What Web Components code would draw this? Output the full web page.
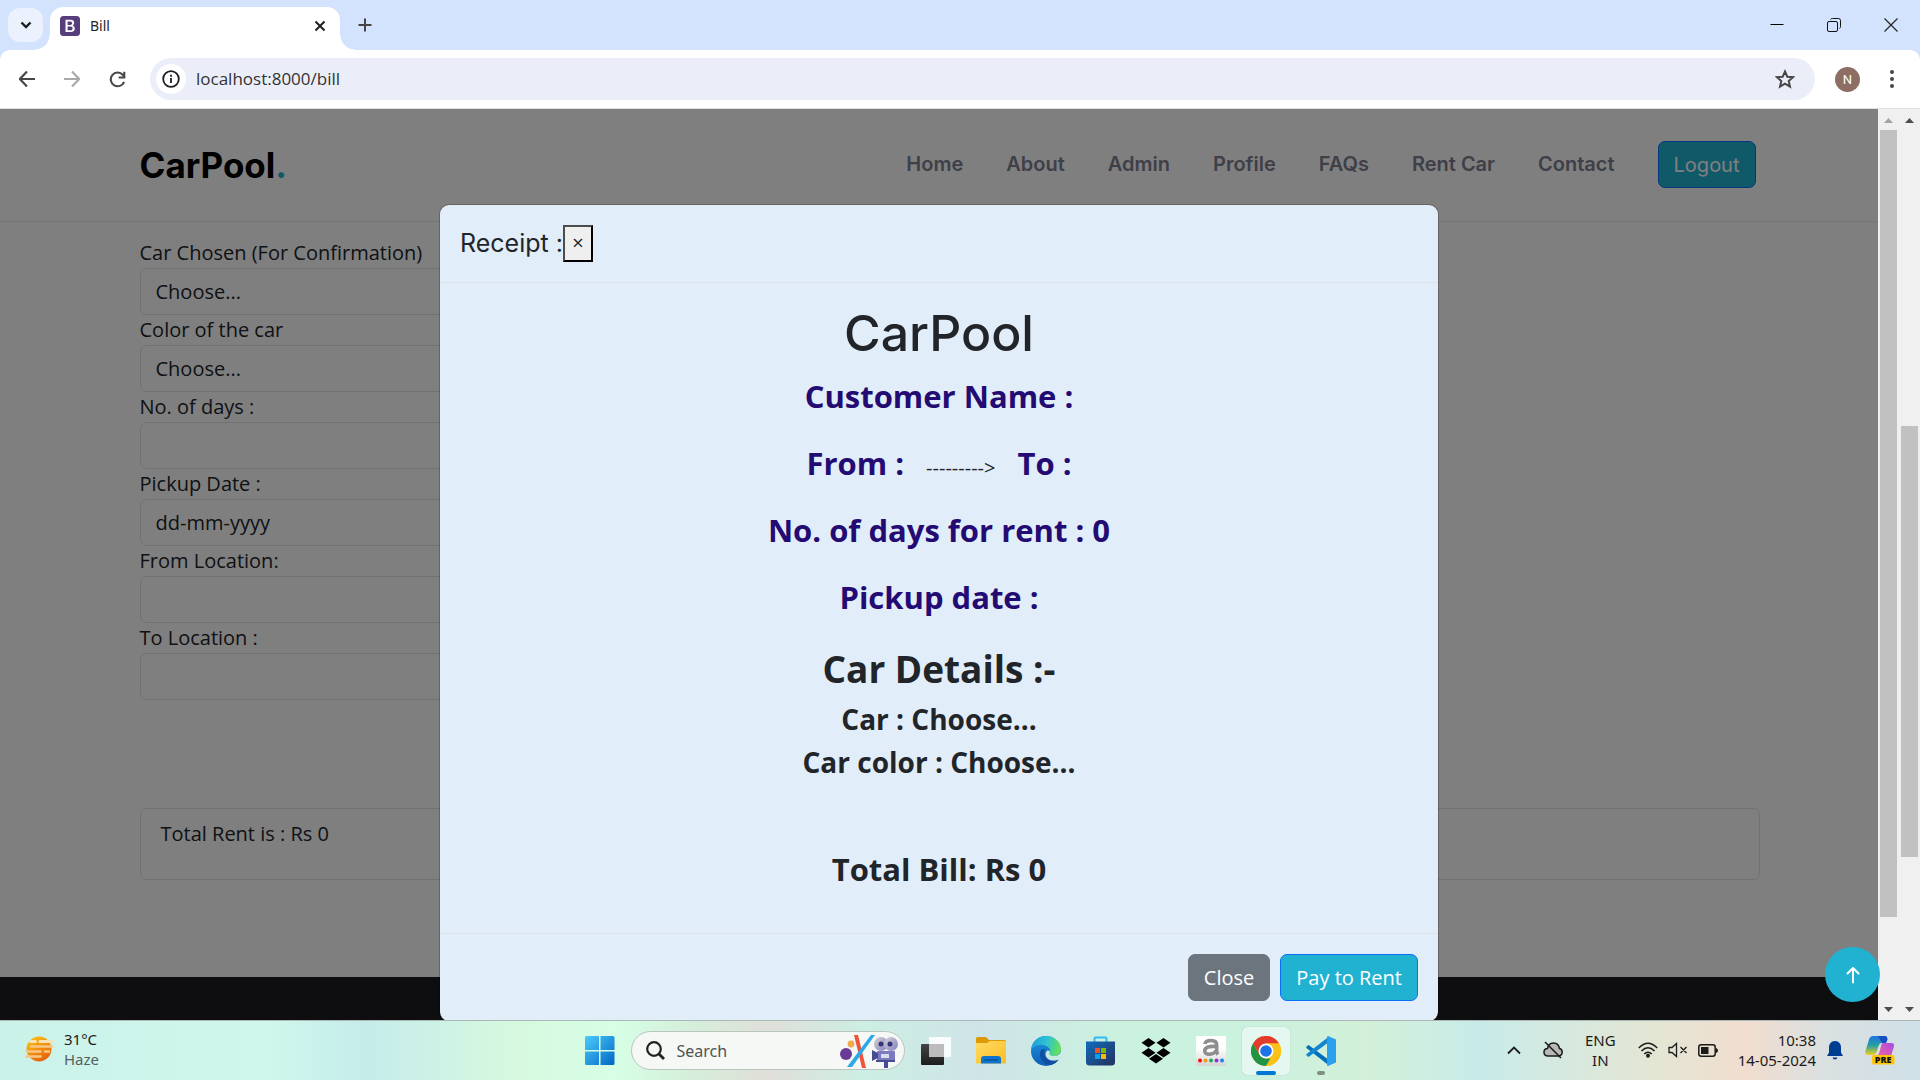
<!DOCTYPE html>
<html lang="en">
<head>
<meta charset="utf-8">
<title>Bill</title>
<style>
  html, body { margin: 0; height: 100%; overflow: hidden; }
  body { font-family: "Open Sans", sans-serif; color: #212529; }
  desktop-screen { height: 100vh; }
</style>
</head>
<body>
<desktop-screen>
  <tab-strip></tab-strip>
  <tool-bar></tool-bar>
  <page-viewport>
    <site-header slot="page"></site-header>
    <bill-form slot="page"></bill-form>
    <receipt-dialog slot="dialog"></receipt-dialog>
    <back-to-top slot="float"></back-to-top>
  </page-viewport>
  <task-bar></task-bar>
</desktop-screen>

<script>
const define = (name, html, setup) => {
  const tpl = document.createElement('template');
  tpl.innerHTML = html;
  customElements.define(name, class extends HTMLElement {
    constructor() {
      super();
      this.attachShadow({ mode: 'open' }).append(tpl.content.cloneNode(true));
    }
    connectedCallback() { if (setup) setup(this, this.shadowRoot); }
  });
};

define('desktop-screen', `
<style>
  :host { display: flex; flex-direction: column; }
</style>
<slot></slot>`);

define('tab-strip', `
<style>
  :host { display: flex; align-items: center; height: 50px; flex: none; background: #d3e3fd; padding: 0 1px 0 8px; font-family: "Noto Sans", sans-serif; }
  button { border: 0; padding: 0; background: none; display: grid; place-items: center; }
  .list { width: 35px; height: 34px; border-radius: 12px; background: #ebf1fd; }
  .tab { position: relative; align-self: flex-end; margin-left: 7px; width: 290px; height: 43px; box-sizing: border-box; padding: 0 10px; border-radius: 13px 13px 0 0; background: #fff; display: flex; align-items: center; gap: 10px; font-size: 14px; line-height: 20px; color: #1f1f1f; padding-bottom: 6px; }
  .tab::before, .tab::after { content: ""; position: absolute; bottom: 0; width: 15px; height: 15px; }
  .tab::before { left: -15px; background: radial-gradient(circle at 0 0, transparent 14px, #fff 15px); }
  .tab::after { right: -15px; background: radial-gradient(circle at 100% 0, transparent 14px, #fff 15px); }
  .title { flex: 1; }
  .new { width: 30px; height: 30px; margin-left: 10px; }
  .window { margin-left: auto; display: flex; }
  .window button { width: 57px; height: 40px; }
</style>
<button class="list" aria-label="Search tabs"><svg width="12" height="8" fill="none" stroke="#1f1f1f" stroke-width="2.4"><path d="M1.5 1.5 6 6l4.500-4.500"/></svg></button>
<div class="tab">
  <svg width="20" height="20"><rect width="20" height="20" rx="3.500" fill="#563d7c"/><path d="M5.500 3.800h5c2.500 0 3.700 1.100 3.700 2.900 0 1.500-.8 2.400-2 2.800 1.600.3 2.600 1.400 2.600 3.100 0 2.200-1.500 3.400-4.100 3.400H5.500zM7.600 5.500v3.400h2.500c1.300 0 2-.6 2-1.700s-.7-1.700-2-1.700zM7.600 10.500v3.800h2.800c1.400 0 2.200-.7 2.200-1.900s-.8-1.900-2.200-1.900z" fill="#fff" fill-rule="evenodd"/></svg>
  <span class="title">Bill</span>
  <button aria-label="Close tab"><svg width="20" height="20" stroke="#1f1f1f" stroke-width="2"><path d="m5.500 5.500 9 9m0-9-9 9"/></svg></button>
</div>
<button class="new" aria-label="New tab"><svg width="14" height="14" stroke="#444" stroke-width="2"><path d="M7 .5v13M.5 7h13"/></svg></button>
<div class="window">
  <button aria-label="Minimize"><svg width="14" height="14" stroke="#000"><path d="M.5 6.500h13"/></svg></button>
  <button aria-label="Restore"><svg width="14" height="14" stroke="#111" fill="none"><rect x=".5" y="3.500" width="10" height="10" rx="1.500"/><path d="M3.500 1.500q.5-1 2-1h6q2 0 2 2v6q0 1.500-1 2"/></svg></button>
  <button aria-label="Close"><svg width="14" height="14" stroke="#222" stroke-width="1.200"><path d="m.5.5 13 13m0-13-13 13"/></svg></button>
</div>`);

define('tool-bar', `
<style>
  :host { display: block; background: #d3e3fd; flex: none; }
  .bar { display: flex; align-items: center; height: 58px; box-sizing: content-box; border-bottom: 1px solid #dcdfe3; background: #fff; border-radius: 10px 10px 0 0; padding: 0 18px 0 12px; }
  button { border: 0; padding: 0; background: none; display: grid; place-items: center; width: 30px; height: 30px; margin-right: 15px; flex: none; }
  .omni { flex: 1; margin: 0 20px 0 3px; height: 42px; border-radius: 21px; background: #ebeef8; display: flex; align-items: center; padding: 0 15px 0 6px; }
  .omni button { margin: 0; }
  .info { background: #fff; border-radius: 50%; }
  input { flex: 1; min-width: 0; margin-left: 10px; padding: 0; border: 0; background: none; outline: 0; font: 17px/24px "Open Sans", sans-serif; color: #333; }
  .avatar { width: 25px; height: 25px; border-radius: 50%; background: #8d6e63; color: #fff; font: 13px/25px Roboto, sans-serif; margin-right: 22px; }
  .menu { width: 20px; margin: 0; }
</style>
<div class="bar">
  <button aria-label="Back"><svg width="16" height="16" viewBox="1 1 16 16" fill="none" stroke="#474747" stroke-width="2.200"><path d="M17 9H2M9 1.500 1.800 9 9 16.500"/></svg></button>
  <button aria-label="Forward"><svg width="16" height="16" viewBox="1 1 16 16" fill="none" stroke="#a9a9a9" stroke-width="2.200"><path d="M1 9h15M9 1.500 16.200 9 9 16.500"/></svg></button>
  <button aria-label="Reload"><svg width="17" height="17" viewBox="0 0 18 18" fill="none" stroke="#474747" stroke-width="2.200"><path d="M16 11.500A7.300 7.300 0 1 1 14.600 4l1.500 2"/><path d="M16.200.8v6.100h-6"/></svg></button>
  <div class="omni">
    <button class="info" aria-label="Site information"><svg width="18" height="18" fill="none" stroke="#1f1f1f" stroke-width="1.800"><circle cx="9" cy="9" r="7.800"/><path d="M9 8v5M9 4.800v1.900"/></svg></button>
    <input aria-label="Address" value="localhost:8000/bill">
    <button aria-label="Bookmark"><svg width="20" height="20" fill="none" stroke="#474747" stroke-width="2"><path d="m10 2.500 2.300 5.200 5.700.5-4.300 3.800 1.300 5.600-5-3-5 3 1.300-5.600L2 8.200l5.700-.5z"/></svg></button>
  </div>
  <button class="avatar" aria-label="Profile">N</button>
  <button class="menu" aria-label="Menu"><svg width="4" height="18" fill="#474747"><circle cx="2" cy="2" r="2"/><circle cx="2" cy="9" r="2"/><circle cx="2" cy="16" r="2"/></svg></button>
</div>`);

define('scroll-track', `
<style>
  :host { display: flex; flex-direction: column; width: 21px; flex: none; background: #f0f0f0; box-sizing: border-box; padding: 0 2px; }
  svg { flex: none; display: block; }
  .space { flex: var(--before, 0); }
  .thumb { flex: var(--size, 1); background: #c1c1c1; }
  .rest { flex: var(--after, 0); }
</style>
<svg width="17" height="21" fill="var(--up, #4d4d4d)"><path d="m4 14 4.500-5 4.500 5z"/></svg>
<div class="space"></div><div class="thumb"></div><div class="rest"></div>
<svg width="17" height="21" fill="#4d4d4d"><path d="m4 8 4.500 5L13 8z"/></svg>`);

define('page-viewport', `
<style>
  :host { display: flex; flex: 1; min-height: 0; overflow: hidden; background: #fff; }
  .frame { position: relative; flex: 1; min-width: 0; overflow: hidden; }
  .page { height: 100%; display: flex; flex-direction: column; }
  .foot { flex: 1; background: #1d1d21; }
  .layer { position: absolute; inset: 0; display: flex; }
  .shade { flex: 1; background: rgba(0, 0, 0, .5); display: flex; justify-content: center; align-items: flex-start; overflow: hidden; }
  .inner { --up: #a3a3a3; --size: 787; --after: 82; }
  .outer { --before: 296; --size: 431; --after: 142; }
</style>
<div class="frame">
  <div class="page"><slot name="page"></slot><div class="foot"></div></div>
  <div class="layer">
    <div class="shade"><slot name="dialog"></slot></div>
    <scroll-track class="inner"></scroll-track>
  </div>
</div>
<scroll-track class="outer"></scroll-track>
<slot name="float"></slot>`);

define('site-header', `
<style>
  :host { display: block; border-bottom: 1px solid #ededed; font-family: Inter, sans-serif; }
  header { max-width: 1620px; margin: 0 auto; height: 112px; display: flex; align-items: center; justify-content: space-between; }
  .logo { color: #000; text-decoration: none; font-size: 35px; line-height: 42px; font-weight: 700; }
  .logo span { color: #21b2d2; }
  nav { display: flex; align-items: center; gap: 43px; padding: 0 4px 1px 0; }
  a { color: #7f7e90; text-decoration: none; font-size: 20px; line-height: 31px; font-weight: 600; }
  button { height: 47px; padding: 0 15px; border: 1px solid #0d6efd; border-radius: 7px; background: #21b2d2; color: #fff; font: 20px/30px Inter, sans-serif; }
</style>
<header>
  <a class="logo" href="#">CarPool<span>.</span></a>
  <nav>
    <a href="#">Home</a><a href="#">About</a><a href="#">Admin</a><a href="#">Profile</a><a href="#">FAQs</a><a href="#">Rent Car</a><a href="#">Contact</a>
    <button>Logout</button>
  </nav>
</header>`);

define('bill-field', `
<style>
  :host { display: block; }
  label { display: block; font-size: 20px; line-height: 30px; }
  input, select { appearance: none; display: block; box-sizing: border-box; width: 100%; height: 47px; margin: 0; padding: 0 15px; border: 1px solid #dee2e6; border-radius: 7px; background: #fff; color: inherit; font: 20px/30px "Open Sans", sans-serif; }
</style>
<label for="control"></label>`, (host, root) => {
  root.querySelector('label').textContent = host.getAttribute('label');
  const value = host.getAttribute('value') || '';
  let control;
  if (host.hasAttribute('select')) {
    control = document.createElement('select');
    control.add(new Option(value));
  } else {
    control = document.createElement('input');
    control.value = value;
  }
  control.id = 'control';
  root.append(control);
});

define('bill-form', `
<style>
  :host { display: block; padding: 16px 0 97px; }
  .container { max-width: 1620px; margin: 0 auto; }
  form { width: 50%; }
  .total { margin-top: 108px; box-sizing: border-box; height: 72px; padding: 10px 20px; border: 1px solid #dee2e6; border-radius: 7px; font-size: 20px; line-height: 30px; }
</style>
<div class="container">
  <form>
    <bill-field label="Car Chosen (For Confirmation)" value="Choose..." select></bill-field>
    <bill-field label="Color of the car" value="Choose..." select></bill-field>
    <bill-field label="No. of days :"></bill-field>
    <bill-field label="Pickup Date :" value="dd-mm-yyyy"></bill-field>
    <bill-field label="From Location:"></bill-field>
    <bill-field label="To Location :"></bill-field>
  </form>
  <div class="total">Total Rent is : Rs 0</div>
</div>`);

define('receipt-dialog', `
<style>
  :host { display: block; width: 1000px; max-width: 100%; margin-top: 95px; box-sizing: border-box; flex: none; border: 1px solid rgba(0, 0, 0, .2); border-radius: 10px; background: #e1edf9; background-clip: padding-box; }
  header { display: flex; align-items: center; padding: 20px; border-bottom: 1px solid #dee2e6; }
  h5 { margin: 0; font: 400 25px/37px Inter, sans-serif; }
  .x { width: 30px; height: 37px; padding: 0 0 2px; border: 2px solid; border-color: #4c4c4c #000 #000 #4c4c4c; background: #efefef; color: #212529; font: 20px/30px "Open Sans", sans-serif; }
  main { padding: 20px 20px 40px; text-align: center; font-weight: 700; }
  h1 { margin: 0 0 9px; font: 500 50px/60px Inter, sans-serif; }
  p { margin: 0; font-size: 31px; line-height: 48px; }
  .info { display: flex; flex-direction: column; gap: 19px; color: #240a73; }
  .route { display: flex; justify-content: center; align-items: baseline; gap: 22px; height: 48px; }
  .route span { font-size: 20px; font-weight: 400; color: #212529; }
  h2 { margin: 25px 0 6px; font-size: 37px; line-height: 46px; font-weight: 700; }
  .car { font-size: 28px; line-height: 43px; }
  .bill { margin-top: 61px; }
  footer { display: flex; justify-content: flex-end; gap: 10px; padding: 20px; border-top: 1px solid #dee2e6; }
  footer button { height: 47px; padding: 0 15px; border: 1px solid #6c757d; border-radius: 7px; background: #6c757d; color: #fff; font: 20px/30px "Open Sans", sans-serif; }
  footer .pay { border-color: #0d6efd; background: #21b2d2; }
</style>
<header><h5>Receipt :</h5><button class="x" aria-label="Close">×</button></header>
<main>
  <h1>CarPool</h1>
  <div class="info">
    <p>Customer Name :</p>
    <p class="route">From : <span>---------&gt;</span> To :</p>
    <p>No. of days for rent : 0</p>
    <p>Pickup date :</p>
  </div>
  <h2>Car Details :-</h2>
  <p class="car">Car : Choose...</p>
  <p class="car">Car color : Choose...</p>
  <p class="bill">Total Bill: Rs 0</p>
</main>
<footer><button>Close</button><button class="pay">Pay to Rent</button></footer>`);

define('back-to-top', `
<style>
  :host { position: fixed; right: 40px; bottom: 78px; }
  a { width: 55px; height: 55px; border-radius: 50%; background: #21b2d2; display: grid; place-items: center; }
</style>
<a href="#" aria-label="Back to top"><svg width="16" height="18" fill="none" stroke="#fff" stroke-width="2" stroke-linecap="round" stroke-linejoin="round"><path d="M8 16.500V2M2.500 7.500 8 2l5.500 5.500"/></svg></a>`);

define('task-bar', `
<style>
  :host { display: grid; grid-template-columns: 1fr auto 1fr; align-items: center; flex: none; height: 59px; border-top: 1px solid #abb9b5; font-family: "Noto Sans", sans-serif; font-size: 15px; line-height: 20px; color: #1b1b1b;
    background: linear-gradient(90deg, #cbf2e9 0, #cff7ec 14%, #c5ecea 19%, #d6f9df 27%, #d6ffe6 32%, #d5eeda 36%, #e0dfd9 40%, #cceee3 45%, #cfe4e8 51%, #cbf1df 58%, #cbf1df 66%, #d3f0d8 71%, #c8ebe9 77%, #e3e6d4 86%, #f1ddcf 91%, #dbe0e0 95%, #cfe0e8 100%); }
  svg { display: block; flex: none; }
  .weather { display: flex; align-items: center; gap: 10px; padding-left: 25px; margin-bottom: 3px; }
  .weather div div + div { color: #55605d; }
  .apps { display: flex; align-items: center; gap: 7px; }
  button { border: 0; padding: 0; background: none; width: 48px; height: 48px; box-sizing: border-box; display: grid; place-items: center; position: relative; }
  .open { background: #e4f7f0; border-radius: 5px; box-shadow: 0 0 1px #9aa; }
  .open::after, .run::after { content: ""; position: absolute; bottom: 0; width: 20px; height: 4px; border-radius: 2px; background: #0078d4; }
  .run::after { width: 8px; background: #7f8f86; }
  .search { display: flex; align-items: center; box-sizing: border-box; width: 274px; height: 39px; border: 1px solid #b9c6bf; border-radius: 20px; background: #f5f8f5; padding: 0 6px 0 14px; }
  .search input { flex: 1; min-width: 0; border: 0; padding: 0; margin-left: 12px; outline: 0; background: none; font: 16px/24px "Noto Sans", sans-serif; color: #4d5452; }
  .search input::placeholder { color: #4d5452; opacity: 1; }
  .tray { display: flex; align-items: center; justify-content: flex-end; padding-right: 25px; margin-bottom: 1px; }
  .lang { text-align: center; margin: 0 22px; }
  .clock { text-align: right; margin: 0 11px 0 20px; }
</style>
<div class="weather">
  <svg width="29" height="28"><defs><linearGradient id="sun" x1=".2" y1="0" x2=".8" y2="1"><stop offset="0" stop-color="#fbc10e"/><stop offset="1" stop-color="#e65a0c"/></linearGradient></defs><circle cx="14" cy="14" r="12.500" fill="url(#sun)"/><path d="M5.500 6.500h5M15 6.500h12.500" stroke="#f8e3b8" stroke-width="3" stroke-linecap="round"/><path d="M6 11.500h21M1.500 16.500h14M20 16.500h4M1.500 21.500h14" stroke="#f5c887" stroke-width="2.600" stroke-linecap="round"/></svg>
  <div><div>31°C</div><div>Haze</div></div>
</div>
<div class="apps">
  <button aria-label="Start"><svg width="30" height="30"><defs><linearGradient id="win" x1="0" y1="0" x2="1" y2="1"><stop offset="0" stop-color="#4ccbfb"/><stop offset="1" stop-color="#0067c5"/></linearGradient></defs><path d="M1.500 0H14v14H0V1.500Q0 0 1.500 0zM15.500 0H28q1.500 0 1.500 1.500V14h-14zM0 15.500h14V29H1.500Q0 29 0 27.500zM15.500 15.500h14v12q0 1.500-1.500 1.500H15.500z" fill="url(#win)"/></svg></button>
  <div class="search">
    <svg width="19" height="19" fill="none" stroke="#222" stroke-width="2.200"><circle cx="8" cy="8" r="6.800"/><path d="m12.500 12.500 5.500 5.500" stroke-width="2.800"/></svg>
    <input aria-label="Search" placeholder="Search">
    <svg width="58" height="34"><defs><linearGradient id="cam" x1="0" y1="0" x2="1" y2="1"><stop offset="0" stop-color="#d6d3cf"/><stop offset="1" stop-color="#8281c4"/></linearGradient></defs><circle cx="11" cy="10" r="3.400" fill="#f5a94d"/><circle cx="6" cy="20" r="6" fill="#6a3a97"/><path d="m14 1h4l8 33h-4z" fill="#f1533a"/><path d="M31 1h4L12 33H7z" fill="#29a8ea"/><circle cx="41" cy="10" r="7" fill="url(#cam)"/><circle cx="51" cy="10" r="7" fill="url(#cam)"/><rect x="37" y="17" width="18" height="10" rx="1" fill="#7a7bbd"/><path d="m32 16 6 3v5l-6 3zM44 28h4v6h-4zM36 26h19v2H36z" fill="#4a4b97"/><path d="M41 20h8v4h-8z" fill="#d9dcf3"/><circle cx="41" cy="10" r="2.500" fill="#35357b"/><circle cx="50" cy="10" r="2.500" fill="#35357b"/></svg>
  </div>
  <button aria-label="Task view"><svg width="30" height="28"><defs><linearGradient id="tv" x1="0" y1="0" x2="0" y2="1"><stop offset="0" stop-color="#444"/><stop offset="1" stop-color="#1d1d1d"/></linearGradient></defs><rect y="7" width="23" height="21" rx="1" fill="url(#tv)"/><rect x="8" width="22" height="20" rx="1" fill="#fff" opacity=".85"/><path d="M8 7h15v13H8z" fill="#bcbcbc"/></svg></button>
  <button aria-label="File Explorer"><svg width="30" height="27"><defs><linearGradient id="fol" x1="0" y1="0" x2="1" y2="1"><stop offset="0" stop-color="#ffdb65"/><stop offset="1" stop-color="#fcbd24"/></linearGradient></defs><path d="M0 1.500Q0 0 1.500 0H10l3 3h15.500Q30 3 30 4.500V10H0z" fill="#dc9a06"/><path d="M0 6h11l3-2h14.500Q30 4 30 5.500V26.500H0z" fill="url(#fol)"/><path d="M5 26.500V22q0-3 3-3h14q3 0 3 3v4.500z" fill="#0e74cd"/><path d="M8 23h14" stroke="#07519c" stroke-width="1.500"/></svg></button>
  <button aria-label="Edge"><svg width="30" height="30"><defs><linearGradient id="e1" x1="0" y1=".3" x2="1" y2=".5"><stop offset="0" stop-color="#1c9dde"/><stop offset=".5" stop-color="#2fc2d3"/><stop offset="1" stop-color="#67e256"/></linearGradient><linearGradient id="e2" x1="0" y1="0" x2="0" y2="1"><stop offset="0" stop-color="#1d9be0"/><stop offset="1" stop-color="#0e5cb5"/></linearGradient></defs><circle cx="15" cy="15" r="15" fill="url(#e2)"/><path d="M0 14C1 5 7.500 0 15 0c8.500 0 15 6 15 13 0 4.500-3.500 7-7 7s-5-1.500-4.500-3c1.200-1.500 1-3.800-1-5.500C12.500 7 4 8 0 14z" fill="url(#e1)"/><path d="M10 14c-3 6 1 15 10 15 3.500-.8 6.500-3.200 8-6-3 2-7 2.300-10 1-4.500-1.800-6-6.500-3.500-10-1.500-1-3.500-1-4.500 0z" fill="#104f9e"/><path d="M18.500 17c-.5 1.500 1 3 4.500 3 3 0 6-1.500 7-4.500L30 22l-2 1.500c-4 2-11 1.500-13-3-1-3 0-5 1.500-6 2-.5 3 1 2 2.500z" fill="#cae9e5"/></svg></button>
  <button aria-label="Microsoft Store"><svg width="30" height="30"><defs><linearGradient id="st" x1="0" y1="0" x2="1" y2="1"><stop offset="0" stop-color="#0f6cbd"/><stop offset="1" stop-color="#26305d"/></linearGradient></defs><path d="M8.500 7V2.500q0-1 1-1h10q1 0 1 1V7" fill="none" stroke="#2dbbf2" stroke-width="2"/><path d="M0 5.500h29V26q0 3.500-3.500 3.500h-22Q0 29.500 0 26z" fill="url(#st)"/><path d="M9 12h5v5H9z" fill="#f25022"/><path d="M15 12h5v5h-5z" fill="#7fba00"/><path d="M9 18h5v5H9z" fill="#00a4ef"/><path d="M15 18h5v5h-5z" fill="#ffb900"/></svg></button>
  <button aria-label="Dropbox"><svg width="30" height="26"><path d="m7.500 0 7 4.700-7 4.700-7-4.700zM22.500 0l7 4.700-7 4.700-7-4.700zM7.500 10l7 4.700-7 4.700-7-4.700zM22.500 10l7 4.700-7 4.700-7-4.700zM15 16l7 4.700L15 25.500l-7-4.800z"/></svg></button>
  <button aria-label="Amazon"><svg width="30" height="30"><defs><linearGradient id="am" x1="0" y1="0" x2="0" y2="1"><stop offset=".4" stop-color="#fff"/><stop offset="1" stop-color="#d5d5d5"/></linearGradient></defs><path d="M0 0h30v30H0z" fill="url(#am)"/><path d="M9 8q.5-3.500 6-3.500 5.700 0 5.700 4.500v6.500q0 1.500 1.300 3M20.700 10.500c-7-.5-12 .5-12 4.500 0 4.500 8 4.500 12-.5" fill="none" stroke="#8e8e8e" stroke-width="3.600"/><circle cx="4" cy="24.500" r="2" fill="#e11"/><circle cx="9.500" cy="24.500" r="2" fill="#f09a1a"/><circle cx="15" cy="24.500" r="2" fill="#1fad5b"/><circle cx="20.500" cy="24.500" r="2" fill="#8c35cf"/><circle cx="26" cy="24.500" r="2" fill="#1b86e4"/></svg></button>
  <button class="open" aria-label="Chrome"><svg width="30" height="30"><circle cx="15" cy="15" r="15" fill="#fbc116"/><path d="M15 15 8.500 18.700 2 7.500A15 15 0 0 1 28 7.500H15z" fill="#e33b2e"/><path d="M2 7.500 8.500 18.700 15 22.500h6.500L15 30A15 15 0 0 1 2 7.500z" fill="#229342"/><path d="M21.500 18.700 15 30a15 15 0 0 0 13-22.500H15z" fill="#fbc116"/><circle cx="15" cy="15" r="7.500" fill="#fff"/><circle cx="15" cy="15" r="5.800" fill="#1f72e8"/></svg></button>
  <button class="run" aria-label="Visual Studio Code"><svg width="30" height="30"><path d="M2.500 9 23 24v5.500L.8 12.200q-1-1 0-2z" fill="#0070b8"/><path d="M2.500 21 23 6V.5L.8 17.800q-1 1 0 2z" fill="#1287d0"/><path d="m22 0 8 3.500v23L22 30q-1.500 0-1-2V2q-.5-2 1-2z" fill="#29a1ee"/></svg></button>
</div>
<div class="tray">
  <svg width="14" height="9" fill="none" stroke="#1b1b1b" stroke-width="1.800"><path d="m1 7.500 6-6 6 6"/></svg>
  <svg width="20" height="18" style="margin-left:22px"><path d="M5 15q-4 0-4-3.700T4.500 7.500Q5.500 2 10.500 2t6 5.500Q19.200 8 19.200 11.300T15.500 15z" fill="#b8b8b6" stroke="#1b1b1b" stroke-width="1.500"/><path d="m2 1 16 16" stroke="#1b1b1b" stroke-width="1.600"/></svg>
  <div class="lang"><div>ENG</div><div>IN</div></div>
  <svg width="20" height="16" fill="none" stroke="#1b1b1b" stroke-width="1.500"><path d="M.8 6q9.200-9.500 18.400 0M3.500 9q6.500-6.500 13 0M6.300 12q3.700-3.600 7.400 0"/><circle cx="10" cy="13.800" r="1.200" fill="#1b1b1b"/></svg>
  <svg width="20" height="16" fill="none" stroke="#1b1b1b" stroke-width="1.300" style="margin-left:10px"><path d="M1 5.500v5h3l4.500 4V1.500L4 5.500zM12.500 5l6 6m0-6-6 6"/></svg>
  <svg width="20" height="13" style="margin-left:10px"><rect x=".8" y=".8" width="16.400" height="11.400" rx="2.500" fill="none" stroke="#1b1b1b" stroke-width="1.500"/><path d="M3 3h7.500v7H3zM18 4q2 .5 2 2.500T18 9z" fill="#1b1b1b"/></svg>
  <div class="clock"><div>10:38</div><div>14-05-2024</div></div>
  <svg width="16" height="19" fill="#003e92"><path d="M8 0c4 0 6 3 6 6.500v5l2 3.500H0l2-3.500v-5C2 3 4 0 8 0zM5.500 16.500h5q-.5 2-2.500 2t-2.500-2z"/></svg>
  <svg width="30" height="29" style="margin-left:22px"><defs><linearGradient id="c1" x1="0" y1="0" x2="0" y2="1"><stop offset="0" stop-color="#1d74e0"/><stop offset=".5" stop-color="#28a0a0"/><stop offset="1" stop-color="#f2cf1d"/></linearGradient><linearGradient id="c2" x1="1" y1="0" x2="0" y2="1"><stop offset="0" stop-color="#a54ae8"/><stop offset="1" stop-color="#f5679a"/></linearGradient></defs><path d="M8 0h12q2.500 0 2 3l-1 4h-4q-2.500 0-3.500 3l-2 6q-1 3-4 3H3q-3.500 0-2.500-4L4 3.500Q5 0 8 0z" fill="url(#c1)"/><path d="M13 0h7q2.500.5 2.500 3.500L21 7h-4z" fill="#174ec4"/><path d="M18 7h8q4 0 2.800 4L26 20H11q2.500-.5 3.500-4l1.500-6q.5-3 2-3z" fill="url(#c2)"/><rect x="7" y="19" width="22.500" height="9.500" rx="2" fill="#fdc60a"/><text x="18.200" y="27" text-anchor="middle" font-family="Open Sans, sans-serif" font-weight="800" font-size="9" fill="#111">PRE</text></svg>
</div>`);
</script>
</body>
</html>
